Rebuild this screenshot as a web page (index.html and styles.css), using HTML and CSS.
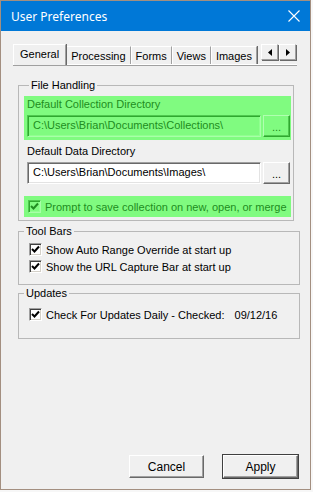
FILE: index.html
```html
<!DOCTYPE html>
<html lang="en">
<head>
  <meta charset="UTF-8">
  <title>User Preferences</title>
  <link rel="stylesheet" href="styles.css">
</head>
<body>
  <div class="window">
    <div class="titlebar">
      <span class="title">User Preferences</span>
      <svg class="close" width="12" height="12" viewBox="0 0 12 12">
        <path d="M0.5 0.5 L11.5 11.5 M11.5 0.5 L0.5 11.5" stroke="#fff" stroke-width="1.1" fill="none"/>
      </svg>
    </div>

    <div class="content">
      <div class="tabstrip">
        <div class="tab selected">General</div>
        <div class="tab">Processing</div>
        <div class="tab">Forms</div>
        <div class="tab">Views</div>
        <div class="tab">Images</div>
        <div class="scroller">
          <span class="arrow"><svg width="4" height="7" viewBox="0 0 4 7"><path d="M4 0 L0 3.5 L4 7 Z" fill="#000"/></svg></span>
          <span class="arrow"><svg width="4" height="7" viewBox="0 0 4 7"><path d="M0 0 L4 3.5 L0 7 Z" fill="#000"/></svg></span>
        </div>
      </div>

      <fieldset class="group file-group">
        <legend>File Handling</legend>

        <div class="highlight path-block">
          <div class="field-label">Default Collection Directory</div>
          <div class="path-row">
            <div class="textbox">C:\Users\Brian\Documents\Collections\</div>
            <div class="browse">...</div>
          </div>
        </div>

        <div class="path-block">
          <div class="field-label">Default Data Directory</div>
          <div class="path-row">
            <div class="textbox">C:\Users\Brian\Documents\Images\</div>
            <div class="browse">...</div>
          </div>
        </div>

        <div class="highlight check-row">
          <span class="checkbox"><svg width="9" height="9" viewBox="0 0 9 9"><path d="M1 4 L3.5 6.5 L8 1.5" stroke="currentColor" stroke-width="2" fill="none"/></svg></span>
          <span>Prompt to save collection on new, open, or merge</span>
        </div>
      </fieldset>

      <fieldset class="group">
        <legend>Tool Bars</legend>
        <div class="check-row">
          <span class="checkbox"><svg width="9" height="9" viewBox="0 0 9 9"><path d="M1 4 L3.5 6.5 L8 1.5" stroke="currentColor" stroke-width="2" fill="none"/></svg></span>
          <span>Show Auto Range Override at start up</span>
        </div>
        <div class="check-row">
          <span class="checkbox"><svg width="9" height="9" viewBox="0 0 9 9"><path d="M1 4 L3.5 6.5 L8 1.5" stroke="currentColor" stroke-width="2" fill="none"/></svg></span>
          <span>Show the URL Capture Bar at start up</span>
        </div>
      </fieldset>

      <fieldset class="group updates-group">
        <legend>Updates</legend>
        <div class="check-row">
          <span class="checkbox"><svg width="9" height="9" viewBox="0 0 9 9"><path d="M1 4 L3.5 6.5 L8 1.5" stroke="currentColor" stroke-width="2" fill="none"/></svg></span>
          <span>Check For Updates Daily - Checked:</span>
          <span class="date">09/12/16</span>
        </div>
      </fieldset>

      <div class="footer">
        <button class="btn">Cancel</button>
        <button class="btn default">Apply</button>
      </div>
    </div>
  </div>
</body>
</html>
```

FILE: styles.css
```css
body {
  margin: 0;
  background: #f7f7f7;
  font-family: 'Liberation Sans', Arial, sans-serif;
  font-size: 11px;
  color: #000;
}

.window {
  width: 311px;
  height: 490px;
  box-sizing: border-box;
  border: 1px solid #a38f80;
  background: #f0f0f0;
  display: flex;
  flex-direction: column;
}

.titlebar {
  height: 30px;
  background: #0078d7;
  color: #fff;
  display: flex;
  align-items: center;
  padding: 0 9px 0 10px;
  flex-shrink: 0;
}

.title {
  font-family: 'Noto Sans', sans-serif;
  font-size: 12px;
  flex: 1;
}

.close {
  margin-right: 1px;
}

.content {
  flex: 1;
  display: flex;
  flex-direction: column;
}

/* tab header */
.tabstrip {
  display: flex;
  align-items: flex-end;
  height: 21px;
  margin: 12px 0 0 12px;
  width: 284px;
  border-bottom: 1px solid #fff;
  box-shadow: 0 1px 0 #a0a0a0;
}

.tab {
  height: 17px;
  line-height: 18px;
  padding: 0 4px;
  border-top: 1px solid #fff;
  border-left: 1px solid #fff;
  border-right: 1px solid #a0a0a0;
  box-shadow: 1px 0 0 #696969;
}

.tab.selected {
  height: 20px;
  line-height: 19px;
  padding: 0 6px;
  margin-bottom: -1px;
  background: #f0f0f0;
  position: relative;
  z-index: 1;
}

.scroller {
  display: flex;
  margin-left: auto;
  align-self: flex-start;
  margin-top: 1px;
}

.arrow {
  width: 15px;
  height: 14px;
  display: flex;
  align-items: center;
  justify-content: center;
  border-top: 1px solid #fff;
  border-left: 1px solid #fff;
  border-right: 1px solid #a0a0a0;
  border-bottom: 1px solid #a0a0a0;
  box-shadow: 1px 1px 0 #696969;
  margin-right: 1px;
}

/* group boxes */
.group {
  margin: 4px 0 0 17px;
  padding: 3px 0 9px 0;
  border: 1px solid #b8b8b8;
  width: 282px;
  box-sizing: border-box;
  min-width: 0;
}

.group legend {
  padding: 0 2px;
  margin-left: 5px;
  line-height: 13px;
}

.file-group {
  margin-top: 14px;
  width: 276px;
  padding: 4px 2px 3px 5px;
}

.highlight {
  background: #80fb80;
  color: #218d21;
}

.path-block {
  padding: 1px 1px 3px 3px;
}

.path-block + .path-block {
  margin-top: 3px;
}

.field-label {
  line-height: 14px;
  margin-bottom: 4px;
}

.path-row {
  display: flex;
  gap: 2px;
}

.textbox {
  flex: 1;
  height: 22px;
  box-sizing: border-box;
  line-height: 19px;
  padding-left: 5px;
  background: #fff;
  border: 1px solid;
  border-color: #a0a0a0 #fff #fff #a0a0a0;
  box-shadow: inset 1px 1px 0 #696969, inset -1px -1px 0 #e3e3e3;
}

.highlight .textbox {
  background: #80fb80;
  border-color: #4fc84f #a8ffa8 #a8ffa8 #4fc84f;
  box-shadow: inset 1px 1px 0 #2fa82f, inset -1px -1px 0 #90ff90;
}

.browse {
  width: 27px;
  height: 22px;
  box-sizing: border-box;
  text-align: center;
  line-height: 22px;
  border: 1px solid;
  border-color: #fff #696969 #696969 #fff;
  box-shadow: inset -1px -1px 0 #a0a0a0;
  background: #f0f0f0;
}

.highlight .browse {
  background: #80fb80;
  border-color: #b0ffb0 #2fa82f #2fa82f #b0ffb0;
  box-shadow: inset -1px -1px 0 #4fc84f;
}

.check-row {
  display: flex;
  align-items: center;
  height: 17px;
  padding-left: 10px;
  white-space: nowrap;
}

.file-group .check-row {
  margin-top: 9px;
  height: 21px;
  padding-left: 4px;
}

.checkbox {
  width: 13px;
  height: 13px;
  flex-shrink: 0;
  box-sizing: border-box;
  border: 1px solid;
  border-color: #a0a0a0 #fff #fff #a0a0a0;
  box-shadow: inset 1px 1px 0 #404040, inset -1px -1px 0 #d4d0c8;
  background: #fff;
  color: #000;
  display: flex;
  align-items: center;
  justify-content: center;
  margin-right: 4px;
}

.highlight .checkbox {
  background: #80fb80;
  color: #218d21;
  border-color: #4fc84f #a8ffa8 #a8ffa8 #4fc84f;
  box-shadow: inset 1px 1px 0 #2fa82f, inset -1px -1px 0 #90ff90;
}

.updates-group {
  margin-top: 2px;
  padding-top: 6px;
}

.updates-group .check-row {
  margin-bottom: 6px;
}

.date {
  margin-left: 10px;
}

.footer {
  margin-top: auto;
  display: flex;
  justify-content: flex-end;
  gap: 19px;
  padding: 0 12px 11px 0;
}

.btn {
  width: 75px;
  height: 23px;
  font-family: 'Liberation Sans', Arial, sans-serif;
  font-size: 12px;
  background: #f0f0f0;
  border: 1px solid;
  border-color: #fff #696969 #696969 #fff;
  box-shadow: inset -1px -1px 0 #a0a0a0;
  padding: 0;
}

.btn.default {
  outline: 1px solid #404040;
}
```
